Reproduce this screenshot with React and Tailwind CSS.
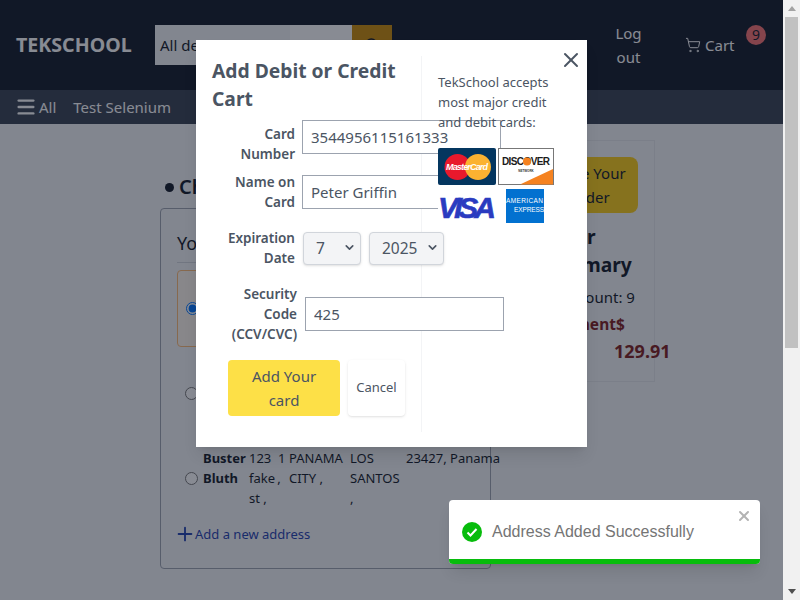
import React from "react";
import { ChevronDown, Menu, Plus, Search, ShoppingCart, X } from "lucide-react";

const CardLogos = () => (
  <svg width="117" height="76" viewBox="0 0 117 76" className="relative z-10 mt-4 block bg-white" style={{ fontFamily: "Liberation Sans, sans-serif" }}>
    <rect x="0" y="0" width="58" height="37" rx="2" fill="#04365f" />
    <circle cx="19.5" cy="19" r="13" fill="#e8192c" />
    <circle cx="40" cy="19" r="13" fill="#fbb231" />
    <text x="8" y="22" fontSize="9" fontWeight="700" fontStyle="italic" fill="#fff" textLength="42">MasterCard</text>
    <rect x="60.5" y="0.5" width="55" height="36" fill="#fff" stroke="#777" />
    <polygon points="82,36.5 115,21 115,36.5" fill="#f58220" />
    <text x="64" y="17" fontSize="10" fontWeight="700" fill="#1b1b1b" textLength="48">DISCOVER</text>
    <circle cx="89" cy="13.5" r="4" fill="#f58220" />
    <text x="88" y="24" fontSize="3" fontWeight="700" fill="#333" textAnchor="middle">NETWORK</text>
    <text x="0" y="70" fontSize="30" fontWeight="700" fontStyle="italic" fill="#2a3bc0" stroke="#2a3bc0" strokeWidth="0.6" textLength="58">VISA</text>
    <rect x="68" y="41" width="38" height="34" fill="#0271d0" />
    <text x="68" y="55" fontSize="6.5" fill="#fff" textLength="37">AMERICAN</text>
    <text x="76" y="64" fontSize="6.5" fill="#fff" textLength="30">EXPRESS</text>
  </svg>
);

const SelectBox = ({ value, options, className }) => (
  <div className={`relative h-[33px] shrink-0 ${className}`}>
    <select defaultValue={value} className="h-full w-full appearance-none rounded border border-[#d1d5db] bg-[#f3f4f6] pl-[12px] text-[15.5px] text-[#4b5563] shadow-sm">
      {options.map((o) => (
        <option key={o}>{o}</option>
      ))}
    </select>
    <ChevronDown size={13} strokeWidth={3} className="absolute right-[5px] top-[9px] text-[#4b5563]" />
  </div>
);

const Header = () => (
  <header className="flex h-[90px] items-center bg-[#111827] pl-4 text-white">
    <span className="w-[139px] text-[19.6px] font-bold">TEKSCHOOL</span>
    <div className="flex h-10 w-[237px] text-[#111827]">
      <div className="flex w-[135px] items-center bg-[#f3f4f6] pl-[5px] text-[15px]">All departments</div>
      <div className="w-[62px] bg-white" />
      <div className="flex w-10 items-center justify-center bg-[#ca8a04]">
        <Search size={16} />
      </div>
    </div>
    <span className="ml-[223px] w-[27px] text-center text-[15px] leading-6">Log out</span>
    <ShoppingCart size={16} strokeWidth={1.5} className="ml-[43px]" />
    <span className="ml-1 w-[29px] text-[15px]">Cart</span>
    <span className="mb-5 ml-3 flex h-5 w-5 items-center justify-center rounded-full bg-[#f87171] text-sm text-[#111827]">9</span>
  </header>
);

const Background = () => (
  <div className="flex flex-1 bg-[#f3f4f6] pl-40 text-[#111827]">
    <div className="w-[331px] shrink-0">
      <div className="mt-[49px] flex h-7 items-center gap-[5px] pl-[5px] text-xl font-semibold">
        <span className="h-[9px] w-[9px] rounded-full bg-[#111827]" />
        Checkout (9 items)
      </div>
      <div className="mt-[7px] h-[361px] rounded border border-[#9ca3af] px-4">
        <h2 className="mt-[20px] h-[34px] border-b border-[#d1d5db] text-lg leading-7">Your Addresses</h2>
        <div className="mt-[7px] flex h-[77px] w-[320px] items-center rounded border border-[#fdba74] bg-[#fff7ed] pl-2">
          <input type="radio" name="address" defaultChecked className="h-[13px] w-[13px]" />
        </div>
        <div className="h-[101px] pl-2 pt-[40px]">
          <input type="radio" name="address" className="block h-[13px] w-[13px]" />
        </div>
        <div className="flex items-center text-[13px] leading-5">
          <input type="radio" name="address" className="ml-2 h-[13px] w-[13px] shrink-0" />
          <span className="ml-[5px] w-[46px] shrink-0 self-start font-bold">Buster Bluth</span>
          <span className="w-[29px] shrink-0 whitespace-nowrap">123<br />fake{"\u2009"},<br />st{"\u00a0"},</span>
          <span className="w-[11px] shrink-0 self-start">1</span>
          <span className="w-[61px] shrink-0 self-start">PANAMA CITY{"\u00a0"},</span>
          <span className="w-[56px] shrink-0">LOS SANTOS ,</span>
          <span className="shrink-0 self-start">23427, Panama</span>
        </div>
        <div className="mt-[16px] flex items-center text-[13px] leading-5 text-[#1e40af]">
          <Plus size={22} strokeWidth={2} className="-my-1 -ml-[3px] -mr-px" />
          Add a new address
        </div>
      </div>
    </div>
    <div className="ml-[39px] mt-4 h-[242px] w-[125px] shrink-0 border border-[#e5e7eb] pl-[16px]">
      <button className="ml-[-7px] mt-4 h-[56px] w-[98px] rounded-lg bg-[#facc15] text-[15px] leading-6">Place Your Order</button>
      <h3 className="-ml-[7px] mt-[10px] text-[19.25px] font-bold leading-7">
        Order
        <br />
        Summary
      </h3>
      <p className="-ml-2 mt-[6px] text-[15px] leading-6 whitespace-nowrap">Item Count: 9</p>
      <p className="mt-[3px] text-[15.5px] font-bold leading-6 text-[#7f1d1d]">Payment$</p>
      <p className="ml-[67px] mt-[3px] text-lg font-bold leading-6 text-[#7f1d1d]">129.91</p>
    </div>
  </div>
);

const Modal = () => (
  <div className="absolute inset-0 bg-[#111827]/50">
    <div className="absolute left-[196px] top-10 flex h-[407px] w-[391px] bg-white text-[#4b5563] shadow-lg">
      <button className="absolute right-1 top-2 text-[#4b5563]">
        <X size={24} strokeWidth={2} />
      </button>
      <div className="my-4 h-[376px] w-[226px] shrink-0 border-r border-[#f3f4f6] pl-4 pt-px">
        <h1 className="text-[19.25px] font-bold leading-7">Add Debit or Credit Cart</h1>
        <div className="mt-[7px] flex h-[44px] items-start text-[13.5px] font-semibold leading-5">
          <label className="mt-1 w-[83px] shrink-0 text-right">Card Number</label>
          <input readOnly value="3544956115161333" className="ml-[7px] h-[34px] w-[199px] shrink-0 border border-[#9ca3af] bg-white pl-2 text-[15px] font-normal" />
        </div>
        <div className="mt-2 flex h-10 items-center text-[13.5px] font-semibold leading-5">
          <label className="w-[83px] shrink-0 text-right">Name on Card</label>
          <input readOnly value="Peter Griffin" className="ml-[7px] h-[34px] w-[199px] shrink-0 border border-[#9ca3af] bg-white pl-2 text-[15px] font-normal" />
        </div>
        <div className="mt-4 flex h-10 items-center text-[13.5px] font-semibold leading-5">
          <label className="w-[83px] shrink-0 text-right">Expiration Date</label>
          <div className="ml-2 flex shrink-0 gap-2 font-normal">
            <SelectBox value="7" options={["7"]} className="w-[58px]" />
            <SelectBox value="2025" options={["2025"]} className="w-[75px]" />
          </div>
        </div>
        <div className="mt-4 flex h-[60px] items-center text-[13.5px] font-semibold leading-5">
          <label className="w-[85px] shrink-0 text-right">Security Code (CCV/CVC)</label>
          <input readOnly value="425" className="ml-2 h-[34px] w-[199px] shrink-0 border border-[#9ca3af] bg-white pl-2 text-[15px] font-normal" />
        </div>
        <div className="ml-4 mt-4 flex gap-2">
          <button className="h-14 w-28 rounded bg-[#fde047] px-4 text-[15px] leading-6">Add Your card</button>
          <button className="h-14 w-[57px] rounded bg-white text-[13px] shadow-sm">Cancel</button>
        </div>
      </div>
      <div className="pl-[16px] pt-8 text-[13px] leading-5">
        <p className="w-[125px]">TekSchool accepts most major credit and debit cards:</p>
        <CardLogos />
      </div>
    </div>
    <div className="absolute left-[449px] top-[500px] flex h-[64px] w-[311px] items-center overflow-hidden rounded bg-white pl-[13px] font-['Liberation_Sans',sans-serif] text-base text-[#757575] shadow-lg">
      <svg width="20" height="20" viewBox="0 0 20 20" className="shrink-0">
        <circle cx="10" cy="10" r="10" fill="#07bc0c" />
        <path d="M5.5 10.5l3 3 6-6.5" fill="none" stroke="#fff" strokeWidth="2" />
      </svg>
      <span className="ml-[10px]">Address Added Successfully</span>
      <X size={16} strokeWidth={3} className="absolute right-2 top-2 text-[#b3b3b3]" />
      <div className="absolute bottom-0 left-0 h-[5px] w-full bg-[#07bc0c]" />
    </div>
  </div>
);

const Scrollbar = () => (
  <aside className="flex w-[17px] shrink-0 flex-col items-center bg-[#f1f1f1]">
    <div className="mt-[6px] h-0 w-0 border-x-[4px] border-b-[5px] border-x-transparent border-b-[#a3a3a3]" />
    <div className="mt-[6px] h-[331px] w-[13px] bg-[#c1c1c1]" />
    <div className="mt-auto mb-[6px] h-0 w-0 border-x-[4px] border-t-[5px] border-x-transparent border-t-[#505050]" />
  </aside>
);

const App = () => {
  return (
    <div className="flex h-[600px] w-[800px] overflow-hidden font-['Noto_Sans',sans-serif]">
      <div className="relative flex w-[783px] shrink-0 flex-col">
        <Header />
        <nav className="flex h-[34px] items-center bg-[#374151] pl-[15px] text-[15px] text-white">
          <Menu size={22} strokeWidth={2.6} />
          <span className="ml-[2px]">All</span>
          <span className="ml-[17px]">Test Selenium</span>
        </nav>
        <Background />
        <Modal />
      </div>
      <Scrollbar />
    </div>
  );
};

export default App;
